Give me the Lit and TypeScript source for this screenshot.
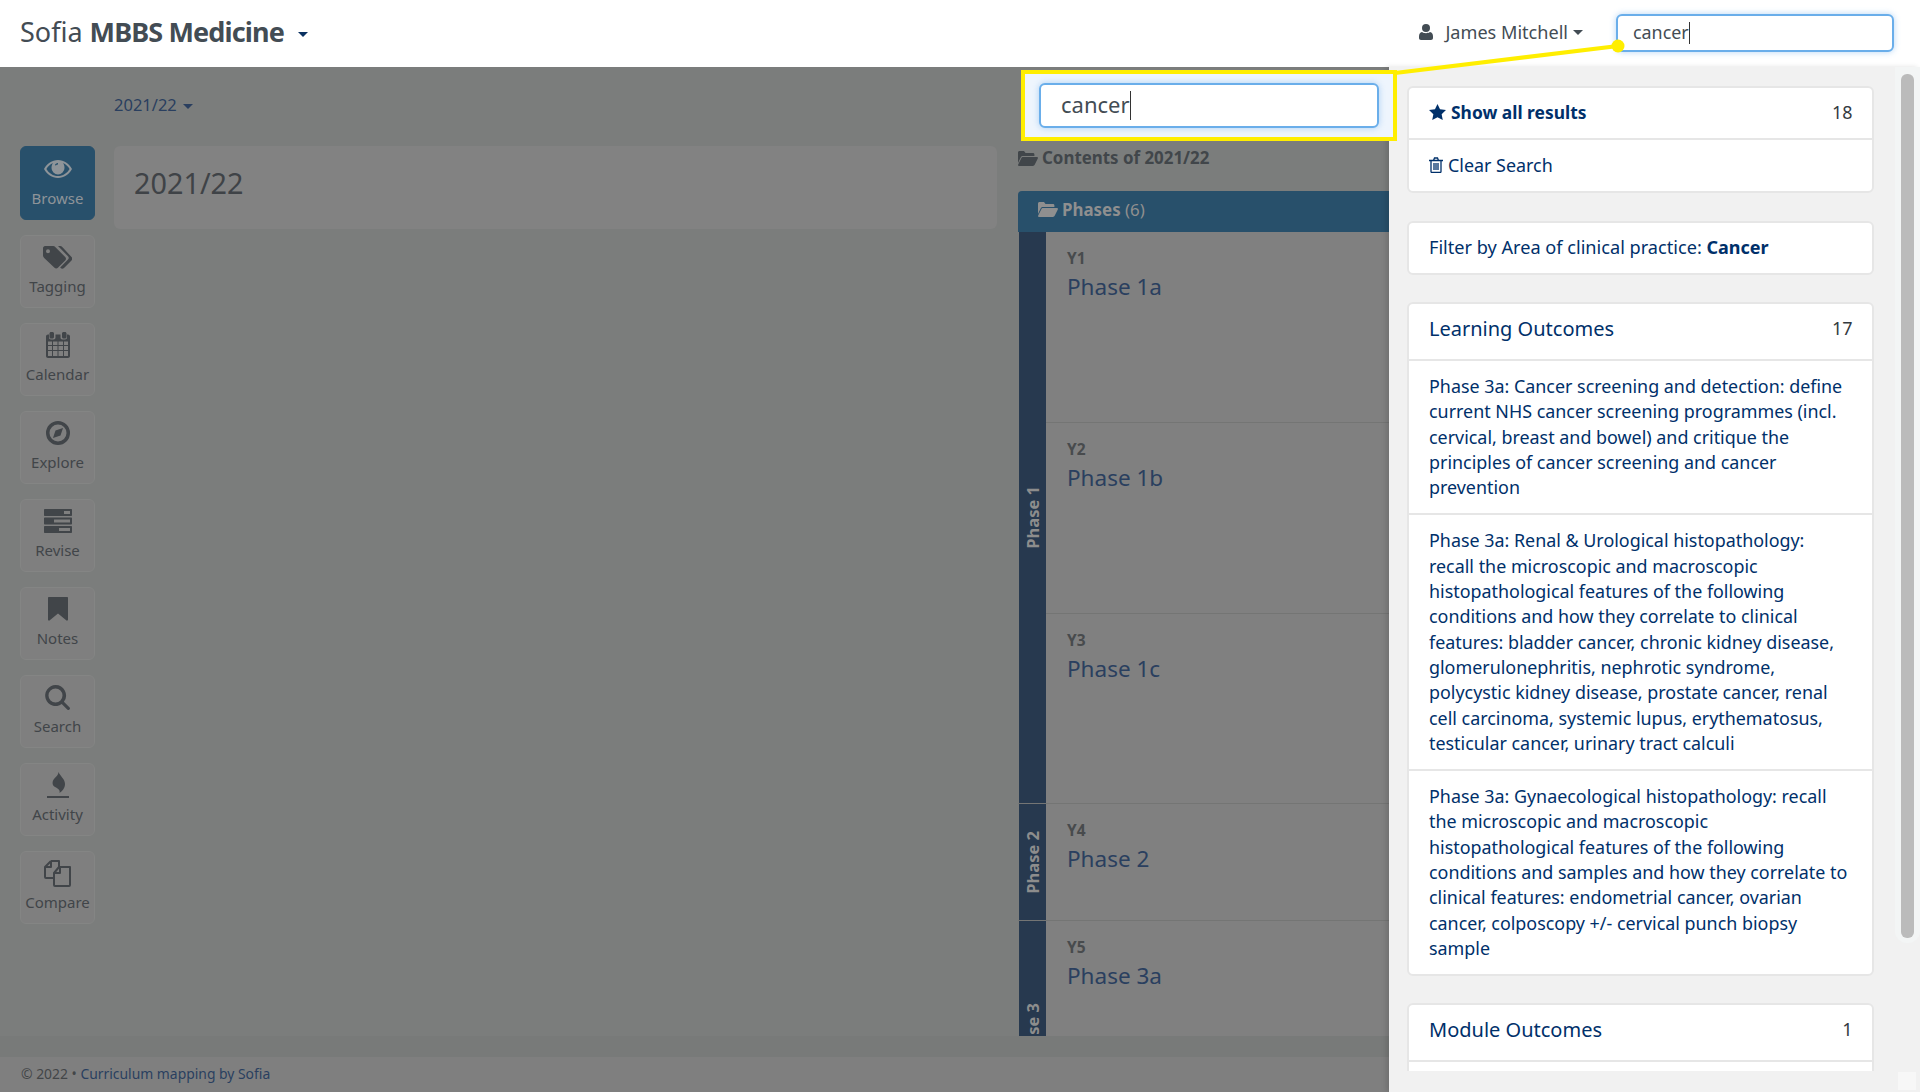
import { LitElement, html, css, svg } from "lit";
import { customElement } from "lit/decorators.js";

const icons: Record<string, unknown> = {
  eye: svg`<svg viewBox="0 0 28 18" width="28" height="18" fill="currentColor"><path fill-rule="evenodd" d="M14 0C8 0 3 3.500 0 9c3 5.500 8 9 14 9s11-3.500 14-9C25 3.500 20 0 14 0Zm0 16C9 16 5 13.300 2.400 9 4 6.400 6.300 4.300 9 3.100 8 4.400 7.500 6 7.500 8a6.500 6.500 0 0 0 13 0c0-2-.5-3.600-1.500-4.900 2.700 1.200 5 3.300 6.600 5.900C23 13.300 19 16 14 16Z"/><path d="M11 4.500a3.500 3.500 0 0 1 3-1.500v1.600c-1 0-1.800.4-2.300 1.200Z" fill="#28506b"/></svg>`,
  tags: svg`<svg viewBox="0 0 29 23" width="29" height="23" fill="currentColor"><path fill-rule="evenodd" d="M2 0h8c1 0 1.800.5 2.500 1.200l9.700 9.800c1 1 1 2.400 0 3.400l-7.300 7.400c-1 1-2.500 1-3.400 0L1.200 12C.4 11.200 0 10.500 0 9.500V2C0 1 1 0 2 0Zm3 3.200a2 2 0 1 0 0 4 2 2 0 0 0 0-4Z"/><path d="M15 0h2c1 0 1.800.5 2.500 1.200l9 9.800c1 1 1 2.400 0 3.400L21 22c-1 1-2.400 1-3.400 0l-.4-.4 7.800-8c1-1 1-2.300 0-3.300Z"/></svg>`,
  calendar: svg`<svg viewBox="0 0 24 26" width="24" height="26" fill="currentColor"><path fill-rule="evenodd" d="M5 0h1.500C7.300 0 8 .7 8 1.500V5c0 .8-.7 1.500-1.500 1.500H5C4.200 6.500 3.500 5.800 3.500 5V1.500C3.500.7 4.200 0 5 0Zm12.500 0H19c.8 0 1.500.7 1.500 1.500V5c0 .8-.7 1.500-1.500 1.500h-1.500C16.700 6.500 16 5.800 16 5V1.500c0-.8.7-1.500 1.500-1.500ZM9.500 2.500h5V5.500c0 1 .7 2 2 2H19c1.300 0 2-1 2-2v-3h1c1.100 0 2 .9 2 2V24c0 1.100-.9 2-2 2H2c-1.100 0-2-.9-2-2V4.500c0-1.100.9-2 2-2h1V5.500c0 1 .7 2 2 2h2.500c1.300 0 2-1 2-2ZM2 9.500V13h4V9.500Zm5 0V13h4.500V9.500Zm5.500 0V13H17V9.500Zm5.500 0V13h4V9.500ZM2 14v4h4v-4Zm5 0v4h4.500v-4Zm5.500 0v4H17v-4Zm5.500 0v4h4v-4ZM2 19v5h4v-5Zm5 0v5h4.500v-5Zm5.500 0v5H17v-5Zm5.500 0v5h4v-5Z"/></svg>`,
  compass: svg`<svg viewBox="0 0 24 24" width="24" height="24" fill="currentColor"><path fill-rule="evenodd" d="M12 0a12 12 0 1 1 0 24 12 12 0 0 1 0-24Zm0 3.500a8.500 8.500 0 1 0 0 17 8.500 8.500 0 0 0 0-17Zm5 3.500-2.500 7.500L7 17l2.500-7.500Z"/></svg>`,
  tasks: svg`<svg viewBox="0 0 28 24" width="28" height="24" fill="currentColor"><path fill-rule="evenodd" d="M1 0h26c.6 0 1 .4 1 1v5c0 .6-.4 1-1 1H1C.4 7 0 6.600 0 6V1c0-.6.400-1 1-1Zm19 2v3h6V2ZM1 8.500h26c.6 0 1 .4 1 1v5c0 .6-.4 1-1 1H1c-.6 0-1-.4-1-1v-5c0-.6.400-1 1-1Zm9 2v3h16v-3ZM1 17h26c.6 0 1 .4 1 1v5c0 .6-.4 1-1 1H1c-.6 0-1-.4-1-1v-5c0-.6.400-1 1-1Zm14 2v3h11v-3Z"/></svg>`,
  bookmark: svg`<svg viewBox="0 0 20 24" width="20" height="24" fill="currentColor"><path d="M1 0h18c.6 0 1 .4 1 1v21.500c0 1-1 1.500-1.800.8L10 16.500l-8.200 6.800c-.8.7-1.800.2-1.800-.8V1c0-.6.400-1 1-1Z"/></svg>`,
  search: svg`<svg viewBox="0 0 25 25" width="25" height="25" fill="currentColor"><path fill-rule="evenodd" d="M10.500 0a10.500 10.500 0 0 1 8.400 16.800l5.500 5.500c.8.800.8 1.700 0 2.300-.7.600-1.500.6-2.200 0l-5.500-5.500A10.500 10.500 0 1 1 10.500 0Zm0 3.500a7 7 0 1 0 0 14 7 7 0 0 0 0-14Z"/></svg>`,
  fire: svg`<svg viewBox="0 0 22 26" width="22" height="26" fill="currentColor"><path d="M11.500 0C13 4 18 7 18 12c0 4.500-3 7-5.500 9 1-3-1.500-4.500-4.500-6C5 13.500 5 9.500 7 7c2-2.500 4.500-4 4.500-7Z"/><rect x="0" y="24" width="22" height="2"/></svg>`,
  copy: svg`<svg viewBox="0 0 27 27" width="27" height="27" fill="none" stroke="currentColor" stroke-width="2" stroke-linejoin="round"><path d="M7 1h8v6.500M7 1 1 7v10c0 .6.400 1 1 1h7"/><path d="M7 1v6H1"/><path d="M15 7h11v18c0 .6-.4 1-1 1H11c-.6 0-1-.4-1-1V13Z"/><path d="M16 7v6h-6"/></svg>`,
  folder: svg`<svg viewBox="0 0 20 15" width="20" height="15" fill="currentColor"><path d="M1.500 0h4.500l1.500 2H15c.8 0 1.400.6 1.400 1.400V5H5c-1 0-1.800.5-2.200 1.300L0 12V1.500C0 .7.700 0 1.500 0Zm3.700 6H19c.8 0 1.200.7.800 1.400l-3 6.200c-.3.800-1 1.400-2 1.400H1c-.8 0-1.200-.7-.8-1.400l3-6.200C3.600 6.500 4.300 6 5.200 6Z"/></svg>`,
  star: svg`<svg viewBox="0 0 18 17" width="17" height="16" fill="currentColor"><path d="m9 0 2.700 5.700 6.300.8-4.600 4.300 1.200 6.200L9 14l-5.600 3 1.200-6.200L0 6.500l6.300-.8Z"/></svg>`,
  trash: svg`<svg viewBox="0 0 14 16" width="14" height="16" fill="none" stroke="currentColor" stroke-width="1.300"><path d="M0 3.500h14M2 3.500v11c0 .5.400 1 1 1h8c.6 0 1-.5 1-1v-11M4.500 3.500 5.500 1h3l1 2.500M5 6v7M7 6v7M9 6v7"/></svg>`,
  user: svg`<svg viewBox="0 0 14 16" width="14" height="16" fill="currentColor"><circle cx="7" cy="4" r="4"/><path d="M3 8c1 .8 2.500 1.200 4 1.200S10 8.800 11 8c2 .3 3 2 3 4.500V14c0 1.200-.8 2-2 2H2c-1.200 0-2-.8-2-2v-1.500C0 10 1 8.300 3 8Z"/></svg>`,
};

const navItems = [
  ["eye", "Browse"],
  ["tags", "Tagging"],
  ["calendar", "Calendar"],
  ["compass", "Explore"],
  ["tasks", "Revise"],
  ["bookmark", "Notes"],
  ["search", "Search"],
  ["fire", "Activity"],
  ["copy", "Compare"],
];

const groups = [
  { label: "Phase 1", height: 572, rows: [["Y1", "Phase 1a", 191], ["Y2", "Phase 1b", 191], ["Y3", "Phase 1c", 190]] },
  { label: "Phase 2", height: 117, rows: [["Y4", "Phase 2", 117]] },
  { label: "Phase 3", height: 228, rows: [["Y5", "Phase 3a", 228]] },
];

const outcomes = [
  ["Phase 3a: Cancer screening and detection: define", "current NHS cancer screening programmes (incl.", "cervical, breast and bowel) and critique the", "principles of cancer screening and cancer", "prevention"],
  ["Phase 3a: Renal & Urological histopathology:", "recall the microscopic and macroscopic", "histopathological features of the following", "conditions and how they correlate to clinical", "features: bladder cancer, chronic kidney disease,", "glomerulonephritis, nephrotic syndrome,", "polycystic kidney disease, prostate cancer, renal", "cell carcinoma, systemic lupus, erythematosus,", "testicular cancer, urinary tract calculi"],
  ["Phase 3a: Gynaecological histopathology: recall", "the microscopic and macroscopic", "histopathological features of the following", "conditions and samples and how they correlate to", "clinical features: endometrial cancer, ovarian", "cancer, colposcopy +/- cervical punch biopsy", "sample"],
];

@customElement("app-root")
export class AppRoot extends LitElement {
  static styles = css`
    :host {
      display: block;
      position: relative;
      width: 1920px;
      height: 1092px;
      overflow: hidden;
      font-family: "Noto Sans", "Open Sans", sans-serif;
      font-size: 17.900px;
      color: #343a40;
      background: #7f7f7f;
    }
    .topbar {
      height: 67px;
      background: #fff;
      display: flex;
      align-items: center;
      padding: 0 26px 0 20px;
      box-sizing: border-box;
    }
    .brand { font-size: 27px; color: #434c54; margin-top: -5px; }
    .brand b { font-weight: 700; letter-spacing: -0.87px; }
    .caret {
      display: inline-block;
      width: 0; height: 0;
      border-left: 5px solid transparent;
      border-right: 5px solid transparent;
      border-top: 5px solid currentColor;
      vertical-align: middle;
    }
    .brand-caret { color: #0a3161; margin-left: 14px; }
    .spacer { flex: 1; }
    .user { display: flex; align-items: center; color: #434c54; font-size: 18.100px; margin-top: -3px; }
    .user svg { margin-right: 12px; }
    .user .caret { margin-left: 5px; }
    .field {
      box-sizing: border-box;
      background: #fff;
      border: 2px solid #6aaeea;
      border-radius: 6px;
      box-shadow: 0 0 6px rgba(90, 165, 235, 0.45);
      display: flex;
      align-items: center;
      color: #434c54;
    }
    .field i { display: inline-block; width: 1px; background: #333; }
    .top-field { width: 278px; height: 38px; margin: -1px 0 0 33px; padding: 0 0 3px 15px; font-size: 17.900px; }
    .top-field i { height: 22px; margin-top: 2px; }
    .body { display: flex; height: 1025px; }
    .stage { width: 1389px; flex: none; display: flex; flex-direction: column; background: #7b7d7c; }
    .stage-main { height: 969px; display: flex; overflow: hidden; }
    .nav { width: 114px; flex: none; padding: 79px 0 0 20px; box-sizing: border-box; display: flex; flex-direction: column; gap: 15px; }
    .nav-btn {
      box-sizing: border-box;
      width: 75px; height: 73px;
      border: 1px solid #848584;
      border-radius: 6px;
      background: #7f7f7f;
      color: #414549;
      font-size: 15px;
      display: flex;
      flex-direction: column;
      align-items: center;
      justify-content: flex-end;
      padding-bottom: 11px;
    }
    .nav-btn .ic { height: 30px; display: flex; align-items: center; justify-content: center; margin-bottom: 4px; }
    .nav-btn.on { background: #28506b; border-color: #28506b; color: #8e9499; height: 74px; }
    .center { width: 883px; flex: none; }
    .year { color: #2a3f5f; font-size: 16.500px; height: 79px; box-sizing: border-box; padding-top: 26px; line-height: 24px; }
    .year .caret { margin-left: 2px; }
    .hero {
      height: 83px;
      background: #828282;
      border-radius: 6px;
      padding: 0 20px 10px;
      box-sizing: border-box;
      display: flex;
      align-items: center;
      font-size: 28.800px;
      color: #3f4347;
    }
    .tree { width: 371px; margin-left: 21px; flex: none; display: flex; flex-direction: column; padding-top: 79px; box-sizing: border-box; }
    .tree-title { height: 45px; flex: none; display: flex; align-items: flex-start; gap: 4px; font-weight: 700; font-size: 16.900px; color: #41464a; line-height: 24px; }
    .tree-title svg { margin-top: 5px; }
    .tree-head {
      height: 41px; flex: none;
      background: #28506b;
      border-top-left-radius: 4px;
      display: flex; align-items: center;
      padding: 0 0 4px 20px; gap: 4px;
      box-sizing: border-box;
      color: #8f8f8f;
      font-size: 16.900px;
    }
    .tree-head b { font-weight: 700; }
    .group { display: flex; flex: none; border-bottom: 1px solid #747574; box-sizing: border-box; }
    .group-label {
      width: 27px; margin-left: 1px;
      flex: none;
      background: #27394f;
      color: #8d8d8d;
      font-weight: 700;
      font-size: 16.500px;
      display: flex; align-items: center; justify-content: center;
    }
    .group-label span { writing-mode: vertical-rl; transform: rotate(180deg); white-space: nowrap; }
    .rows { flex: 1; background: #808080; }
    .row { box-sizing: border-box; padding: 14px 0 0 21px; border-bottom: 1px solid #747574; }
    .row:last-child { border-bottom: 0; }
    .row small { display: block; font-size: 15.500px; font-weight: 700; color: #484b4d; line-height: 24px; }
    .row a { display: block; font-size: 22.500px; color: #2a3f5f; line-height: 33px; }
    .footnote { height: 21px; background: #787a79; }
    .foot { flex: 1; background: #7f7f7f; font-size: 13.900px; color: #434648; padding: 6px 0 0 21px; box-sizing: border-box; line-height: 22px; }
    .foot a { color: #2a3f5f; }
    .panel {
      flex: 1;
      position: relative;
      background: #f1f1f1;
      box-shadow: -3px 0 5px rgba(0, 0, 0, 0.12);
    }
    .clip { height: 1004px; overflow: hidden; padding: 19px 0 0 18px; box-sizing: border-box; display: flex; flex-direction: column; gap: 27.500px; }
    .card { width: 467px; flex: none; box-sizing: border-box; background: #fff; border: 2px solid #e6e6e6; border-radius: 6px; color: #00306a; }
    .line {
      box-sizing: border-box;
      min-height: 51.500px;
      display: flex; align-items: center; justify-content: space-between;
      padding: 0 19.500px 1px 20px;
      border-bottom: 2px solid #e6e6e6;
    }
    .line:last-child { border-bottom: 0; }
    .line.short { min-height: 50px; font-size: 18.150px; }
    .line.short b { font-size: 18px; }
    .line span.lab { display: flex; align-items: center; gap: 5px; }
    .line b { font-weight: 700; font-size: 17.400px; }
    .count { color: #343a40; }
    .head { min-height: 57px; font-size: 20px; padding-bottom: 7px; }
    .head .count { font-size: 18px; }
    .item { padding: 13px 19.500px 12.500px 20px; line-height: 25.350px; border-bottom: 2px solid #e6e6e6; white-space: nowrap; }
    .item:last-child { border-bottom: 0; }
    .item div { height: 25.350px; }
    .stub { height: 30px; }
    .scroll { position: absolute; left: 506px; top: 0; width: 25px; height: 876px; background: #f3f5f5; border-radius: 0 0 12px 12px; }
    .thumb { position: absolute; left: 6px; top: 7px; width: 13px; height: 864px; background: #bbb; border-radius: 6px; }
    .corner { position: absolute; right: 4px; bottom: 2px; width: 18px; height: 18px; background: #f7f7f7; }
    .callout {
      position: absolute;
      left: 1021px; top: 70px;
      width: 376px; height: 71px;
      box-sizing: border-box;
      background: #eef5fd;
      border: 4px solid #ffee00;
      display: flex; align-items: center; justify-content: center;
    }
    .callout .field { width: 340px; height: 45px; padding: 0 0 3px 20px; font-size: 22px; }
    .callout .field i { height: 29px; margin-top: 3px; }
    .leader { position: absolute; left: 0; top: 0; pointer-events: none; }
  `;

  icon(name: string) {
    return icons[name];
  }

  render() {
    return html`
      <div class="topbar">
        <div class="brand">Sofia <b>MBBS Medicine</b><span class="caret brand-caret"></span></div>
        <div class="spacer"></div>
        <div class="user">${this.icon("user")}James Mitchell<span class="caret"></span></div>
        <div class="field top-field">cancer<i></i></div>
      </div>
      <div class="body">
        <div class="stage">
          <div class="stage-main">
            <div class="nav">
              ${navItems.map(
                ([ic, label], i) => html`<div class="nav-btn ${i === 0 ? "on" : ""}"><div class="ic">${this.icon(ic)}</div>${label}</div>`
              )}
            </div>
            <div class="center">
              <div class="year">2021/22 <span class="caret"></span></div>
              <div class="hero">2021/22</div>
            </div>
            <div class="tree">
              <div class="tree-title">${this.icon("folder")}Contents of 2021/22</div>
              <div class="tree-head">${this.icon("folder")}<span><b>Phases</b> (6)</span></div>
              ${groups.map(
                (g) => html`<div class="group" style="height:${g.height}px">
                  <div class="group-label"><span>${g.label}</span></div>
                  <div class="rows">
                    ${g.rows.map(
                      (r) => html`<div class="row" style="height:${r[2]}px"><small>${r[0]}</small><a>${r[1]}</a></div>`
                    )}
                  </div>
                </div>`
              )}
            </div>
          </div>
          <div class="footnote"></div>
          <div class="foot">© 2022 • <a>Curriculum mapping by Sofia</a></div>
        </div>
        <div class="panel">
          <div class="clip">
            <div class="card">
              <div class="line"><span class="lab">${this.icon("star")}<b>Show all results</b></span><span class="count">18</span></div>
              <div class="line"><span class="lab">${this.icon("trash")}Clear Search</span></div>
            </div>
            <div class="card">
              <div class="line short"><span>Filter by Area of clinical practice: <b>Cancer</b></span></div>
            </div>
            <div class="card">
              <div class="line head"><span>Learning Outcomes</span><span class="count">17</span></div>
              ${outcomes.map((o) => html`<div class="item">${o.map((l) => html`<div>${l}</div>`)}</div>`)}
            </div>
            <div class="card">
              <div class="line head"><span>Module Outcomes</span><span class="count">1</span></div>
              <div class="stub"></div>
            </div>
          </div>
          <div class="scroll"><div class="thumb"></div></div>
          <div class="corner"></div>
        </div>
      </div>
      <div class="callout"><div class="field">cancer<i></i></div></div>
      <svg class="leader" width="1920" height="1092">
        <line x1="1395" y1="73" x2="1618" y2="46" stroke="#ffee00" stroke-width="4"></line>
        <circle cx="1618" cy="46" r="6.500" fill="#ffee00"></circle>
      </svg>
    `;
  }
}
